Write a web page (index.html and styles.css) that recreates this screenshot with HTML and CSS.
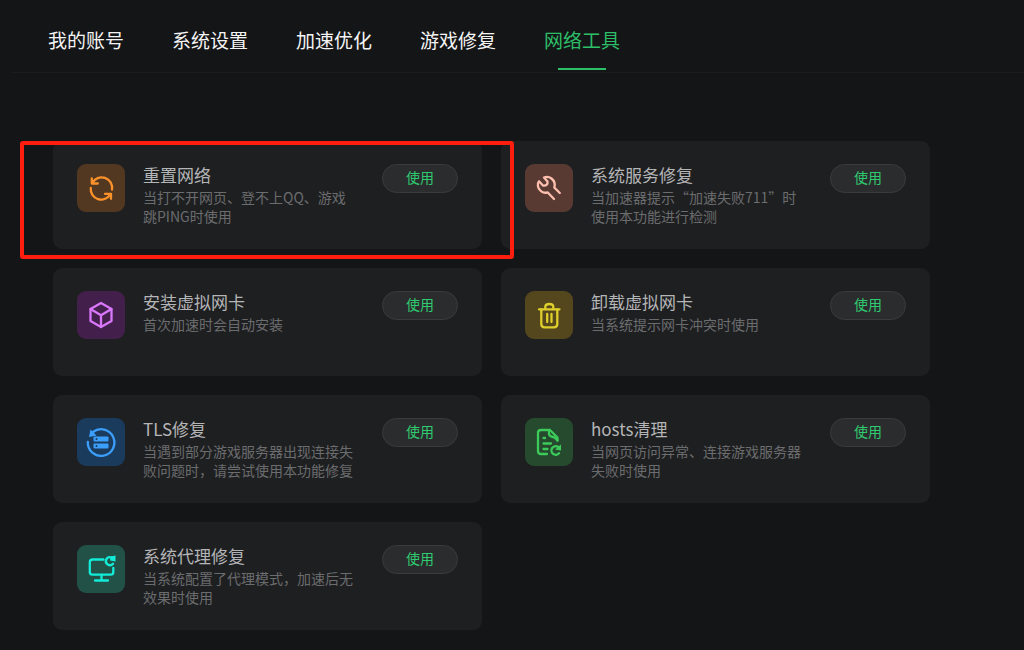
FILE: index.html
```html
<!DOCTYPE html>
<html lang="zh-CN">
<head>
    <meta charset="UTF-8">
    <meta name="viewport" content="width=device-width, initial-scale=1.0">
    <title>网络工具</title>
    <link rel="stylesheet" href="styles.css">
</head>
<body>

<nav class="tabs">
    <a class="tab" href="#">我的账号</a>
    <a class="tab" href="#">系统设置</a>
    <a class="tab" href="#">加速优化</a>
    <a class="tab" href="#">游戏修复</a>
    <a class="tab active" href="#">网络工具</a>
</nav>

<main class="tools">
    <section class="card highlighted">
        <svg class="icon orange" viewBox="0 0 48 48" aria-hidden="true">
            <path d="M14.8 14.5v5h6"/>
            <path d="M15.3 19A10.5 10.5 0 0 1 35 25.5"/>
            <path d="M34 34.8v-5h-6"/>
            <path d="M33.5 30A10.5 10.5 0 0 1 13.8 23.8"/>
        </svg>
        <div class="info">
            <h2>重置网络</h2>
            <p>当打不开网页、登不上QQ、游戏跳PING时使用</p>
        </div>
        <button type="button" class="use-button">使用</button>
    </section>

    <section class="card">
        <svg class="icon brown" viewBox="0 0 48 48" aria-hidden="true">
            <path d="M34.8 29L29.3 23.5C30.5 19.5 29 16.5 26.5 14.5C24.5 13 21.5 12.5 19 13.5L22.5 17.5C23 20 21.5 22 18 21.5L14 17.3C12 20 12.7 24 15.3 26.5C17.5 28.7 20 29.2 22.5 28.3L29 35"/>
        </svg>
        <div class="info">
            <h2>系统服务修复</h2>
            <p>当加速器提示“加速失败711”时使用本功能进行检测</p>
        </div>
        <button type="button" class="use-button">使用</button>
    </section>

    <section class="card">
        <svg class="icon purple" viewBox="0 0 48 48" aria-hidden="true">
            <path d="M24 12L34.5 18V30L24 36L13.5 30V18Z"/>
            <path d="M13.5 18L24 24.3L34.5 18M24 24.3V36"/>
        </svg>
        <div class="info">
            <h2>安装虚拟网卡</h2>
            <p>首次加速时会自动安装</p>
        </div>
        <button type="button" class="use-button">使用</button>
    </section>

    <section class="card">
        <svg class="icon yellow" viewBox="0 0 48 48" aria-hidden="true">
            <path d="M14 18.3H34.5"/>
            <path d="M20.3 18V16Q20.3 13 24.3 13Q28.3 13 28.3 16V18"/>
            <path d="M16.3 18.5V33Q16.3 36.3 19.5 36.3H29Q32.3 36.3 32.3 33V18.5"/>
            <path d="M22.2 23V31M26.5 23V31"/>
        </svg>
        <div class="info">
            <h2>卸载虚拟网卡</h2>
            <p>当系统提示网卡冲突时使用</p>
        </div>
        <button type="button" class="use-button">使用</button>
    </section>

    <section class="card">
        <svg class="icon blue" viewBox="0 0 48 48" aria-hidden="true">
            <path d="M10.8 24A13.3 13.3 0 1 0 16 14"/>
            <path class="solid" d="M13.5 11.5L19.5 17.5L12 19Z"/>
            <rect class="solid" x="16.5" y="18.5" width="15" height="5" rx="1"/>
            <rect class="solid" x="16.5" y="25.5" width="15" height="5" rx="1"/>
            <circle class="hole" cx="19.5" cy="21" r="1"/>
            <circle class="hole" cx="19.5" cy="28" r="1"/>
        </svg>
        <div class="info">
            <h2>TLS修复</h2>
            <p>当遇到部分游戏服务器出现连接失败问题时，请尝试使用本功能修复</p>
        </div>
        <button type="button" class="use-button">使用</button>
    </section>

    <section class="card">
        <svg class="icon green" viewBox="0 0 48 48" aria-hidden="true">
            <path d="M22 36H16Q13 36 13 33V15Q13 12 16 12H25L32.5 19.5V22.5"/>
            <path d="M24 12.5V15.5Q24 18 26.5 18.5Q30 19 32.5 22.5"/>
            <path d="M18.5 20H20M18.5 25.5H26M18.5 31H22.5"/>
            <path d="M34 35.3A4.3 4.3 0 1 1 33 28.8"/>
            <path class="solid" d="M36 26.5V32.5L30 31.5Z"/>
        </svg>
        <div class="info">
            <h2>hosts清理</h2>
            <p>当网页访问异常、连接游戏服务器失败时使用</p>
        </div>
        <button type="button" class="use-button">使用</button>
    </section>

    <section class="card">
        <svg class="icon teal" viewBox="0 0 48 48" aria-hidden="true">
            <path d="M26.5 14.5H15.5Q12.8 14.5 12.8 17.3V27Q12.8 29.7 15.5 29.7H33.5Q36.3 29.7 36.3 27V23"/>
            <path d="M24.5 30V35M18 35.5H31"/>
            <path d="M36 18.7A4 4 0 1 1 34 12.3"/>
            <path class="solid" d="M38.5 10.5V16.5L33 15.5L33.5 11.5Z"/>
        </svg>
        <div class="info">
            <h2>系统代理修复</h2>
            <p>当系统配置了代理模式，加速后无效果时使用</p>
        </div>
        <button type="button" class="use-button">使用</button>
    </section>
</main>

</body>
</html>
```

FILE: styles.css
```css
body {
    font-family: "Noto Sans CJK SC", sans-serif;
    background-color: #141517;
    color: #b4b5b6;
    margin: 0;
}

.tabs {
    display: flex;
    gap: 48px;
    margin-left: 12px;
    padding-left: 36px;
    border-bottom: 1px solid #1b1c1e;
}

.tab {
    position: relative;
    padding: 27px 0 19px;
    font-size: 19px;
    line-height: 26px;
    color: #f4f4f4;
    text-decoration: none;
    white-space: nowrap;
}

.tab.active {
    color: #2dbe68;
}

.tab.active::after {
    content: "";
    position: absolute;
    left: 50%;
    bottom: 2px;
    width: 48px;
    height: 2px;
    margin-left: -24px;
    background-color: #2dbe68;
}

.tools {
    display: grid;
    grid-template-columns: 1fr 1fr;
    grid-auto-rows: 1fr;
    gap: 19px;
    max-width: 877px;
    margin: 68px 53px 20px;
}

.card {
    position: relative;
    display: flex;
    align-items: flex-start;
    padding: 23px 24px;
    border-radius: 9px;
    background-color: #1e1f21;
}

.highlighted::after {
    content: "";
    position: absolute;
    z-index: 1;
    inset: 0 -32px -10px -33px;
    border: 4px solid #ff1d10;
    border-radius: 3px;
    pointer-events: none;
}

.icon {
    flex: none;
    width: 48px;
    height: 48px;
    margin-right: 18px;
    border-radius: 9px;
    fill: none;
    stroke: currentColor;
    stroke-width: 2.3;
    stroke-linecap: round;
    stroke-linejoin: round;
}

.icon .solid {
    fill: currentColor;
    stroke: none;
}

.icon .hole {
    fill: #1b3b5c;
    stroke: none;
}

.orange {
    color: #fb912b;
    background-color: #523820;
}

.brown {
    color: #fdbfae;
    background-color: #583a33;
}

.purple {
    color: #d977fa;
    background-color: #431f4b;
}

.yellow {
    color: #dfcf2b;
    background-color: #54461d;
}

.blue {
    color: #3c9efb;
    background-color: #1b3b5c;
}

.green {
    color: #3ccb5a;
    background-color: #254a2e;
}

.teal {
    color: #12ecd8;
    background-color: #215147;
}

.info {
    flex: 1;
    margin-right: 24px;
}

.info h2 {
    margin: 0 0 2px;
    font-size: 17px;
    font-weight: normal;
    line-height: 22px;
}

.info p {
    margin: 0;
    font-size: 14px;
    line-height: 19px;
    color: #6b6c6e;
}

.use-button {
    flex: none;
    width: 76px;
    height: 29px;
    padding: 0 0 3px;
    border: 1px solid #3a3b3d;
    border-radius: 15px;
    background-color: #2b2c2e;
    color: #2fcb70;
    font-family: inherit;
    font-size: 14px;
    cursor: pointer;
}

.use-button:hover {
    background-color: #343537;
}
```
